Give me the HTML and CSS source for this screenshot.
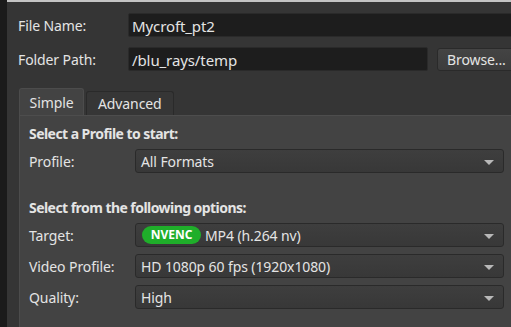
FILE: index.html
```html
<!DOCTYPE html>
<html lang="en">
<head>
    <meta charset="UTF-8">
    <title>Export Video</title>
    <link rel="stylesheet" href="styles.css">
</head>
<body>
    <div class="edge"></div>
    <div class="main">
        <div class="row">
            <div class="label">File Name:</div>
            <div class="input wide">Mycroft_pt2</div>
        </div>
        <div class="row folder">
            <div class="label">Folder Path:</div>
            <div class="input path">/blu_rays/temp</div>
            <button class="browse">Browse...</button>
        </div>

        <div class="tabs">
            <div class="tab active">Simple</div>
            <div class="tab">Advanced</div>
        </div>
        <div class="panel">
            <div class="heading">Select a Profile to start:</div>
            <div class="field">
                <div class="flabel">Profile:</div>
                <div class="combo">All Formats<span class="arrow"></span></div>
            </div>

            <div class="heading second">Select from the following options:</div>
            <div class="field">
                <div class="flabel">Target:</div>
                <div class="combo"><span class="pill">NVENC</span>MP4 (h.264 nv)<span class="arrow"></span></div>
            </div>
            <div class="field">
                <div class="flabel">Video Profile:</div>
                <div class="combo">HD 1080p 60 fps (1920x1080)<span class="arrow"></span></div>
            </div>
            <div class="field">
                <div class="flabel">Quality:</div>
                <div class="combo">High<span class="arrow"></span></div>
            </div>
        </div>
    </div>
</body>
</html>
```

FILE: styles.css
```css
body {
    margin: 0;
    height: 327px;
    display: flex;
    overflow: hidden;
    font-family: "Noto Sans", "Open Sans", sans-serif;
    font-size: 14px;
    letter-spacing: -0.1px;
    color: #e4e4e4;
    background: #353535;
}
.edge {
    width: 7px;
    flex: none;
    background: #1b1b1b;
}
.main {
    flex: 1;
    min-width: 0;
    overflow: hidden;
    border-top: 2px solid #c4c4c4;
    padding: 11px 0 0 11px;
}
.row {
    display: flex;
    align-items: center;
    height: 24px;
}
.row.folder { margin-top: 10px; }
.label { width: 110px; flex: none; }
.input {
    height: 24px;
    line-height: 24px;
    box-sizing: border-box;
    padding-left: 3px;
    background: #1d1d1d;
    border: 1px solid #2a2a2a;
    border-radius: 2px;
    font-size: 15px;
}
.input.wide { flex: 1; margin-right: -10px; }
.input.path { width: 300px; flex: none; }
.browse {
    margin-left: 9px;
    width: 90px;
    flex: none;
    height: 23px;
    padding: 0 0 0 9px;
    text-align: left;
    font-family: inherit;
    font-size: 14px;
    letter-spacing: -0.1px;
    color: #e4e4e4;
    background: linear-gradient(#444444, #3c3c3c);
    border: 1px solid #2a2a2a;
    border-radius: 3px;
}
.tabs {
    display: flex;
    align-items: flex-end;
    margin-top: 17px;
    margin-left: 1px;
    gap: 2px;
    height: 27px;
}
.tab {
    height: 24px;
    line-height: 23px;
    padding: 0 11px;
    box-sizing: border-box;
    background: #363636;
    border: 1px solid #2a2a2a;
    border-bottom: none;
    border-radius: 3px 3px 0 0;
}
.tab.active {
    height: 27px;
    line-height: 27px;
    width: 65px;
    text-align: center;
    padding: 0;
    background: #434343;
    border-color: #4c4c4c;
}
.panel {
    margin-left: 1px;
    height: 220px;
    background: #434343;
    border-top: 1px solid #4d4d4d;
    border-left: 1px solid #4c4c4c;
    padding: 8px 0 0 9px;
}
.heading {
    font-weight: bold;
    letter-spacing: -0.55px;
    height: 20px;
    line-height: 20px;
}
.heading.second { margin-top: 25px; }
.field {
    display: flex;
    align-items: center;
    height: 24px;
    margin-top: 7px;
}
.heading + .field { margin-top: 5px; }
.flabel { width: 106px; flex: none; }
.combo {
    position: relative;
    width: 369px;
    height: 24px;
    box-sizing: border-box;
    display: flex;
    align-items: center;
    padding-left: 5px;
    background: linear-gradient(#3e3e3e, #383838);
    border: 1px solid #2a2a2a;
    border-radius: 3px;
}
.arrow {
    position: absolute;
    right: 9px;
    top: 10px;
    width: 0;
    height: 0;
    border-left: 5px solid transparent;
    border-right: 5px solid transparent;
    border-top: 5px solid #b8b8b8;
}
.pill {
    background: #1fae2a;
    color: #ffffff;
    font-size: 12px;
    font-weight: bold;
    letter-spacing: 0;
    border-radius: 9px;
    height: 18px;
    line-height: 18px;
    width: 59px;
    text-align: center;
    margin-right: 4px;
    margin-left: 1px;
}
```
